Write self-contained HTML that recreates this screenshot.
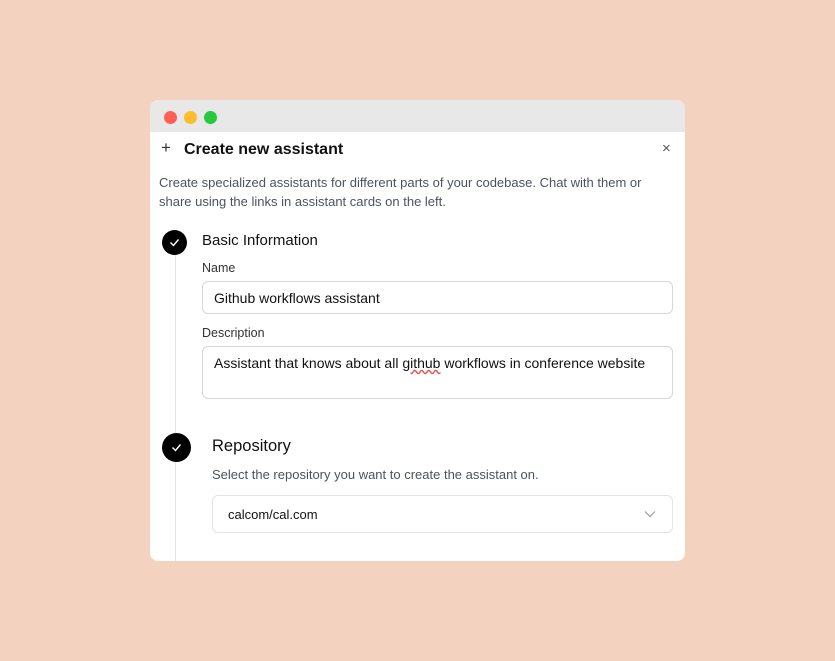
<!DOCTYPE html>
<html><head><style>
*{box-sizing:border-box;margin:0;padding:0}
body{width:835px;height:661px;background:#f3d2bf;font-family:"Liberation Sans",sans-serif;position:relative;overflow:hidden}
.win{position:absolute;left:150px;top:100px;width:535px;height:461px;background:#fff;border-radius:8px;overflow:hidden}
.bar{height:32px;background:#e8e8e8;position:relative}
.dot{position:absolute;top:11px;width:13px;height:13px;border-radius:50%}
.a{position:absolute;white-space:nowrap}
.inp{position:absolute;border:1px solid #d4d6dc;border-radius:6px;font-size:14px;color:#111}
.chk{position:absolute;border-radius:50%;background:#000}
</style></head><body>
<div class="win">
<div class="bar">
<div class="dot" style="left:14px;background:#fe5f57"></div>
<div class="dot" style="left:34px;background:#febc2e"></div>
<div class="dot" style="left:54px;background:#28c840"></div>
</div>
<div class="a" style="left:11px;top:38px;font-size:17px;color:#333">+</div>
<div class="a" style="left:34px;top:41px;font-size:16px;font-weight:bold;color:#111">Create new assistant</div>
<div class="a" style="left:512px;top:40px;font-size:15px;color:#555">×</div>
<div class="a" style="left:9px;top:73px;font-size:13px;line-height:19px;color:#4b5260">Create specialized assistants for different parts of your codebase. Chat with them or<br>share using the links in assistant cards on the left.</div>
<div style="position:absolute;left:25px;top:150px;width:1px;height:311px;background:#e2e2e2"></div>
<div class="chk" style="left:12px;top:130px;width:25px;height:25px"><svg width="25" height="25"><path d="M8.5 12.5l3 3 5-6" stroke="#fff" stroke-width="1.4" fill="none"/></svg></div>
<div class="a" style="left:52px;top:132px;font-size:15px;color:#111">Basic Information</div>
<div class="a" style="left:52px;top:161px;font-size:12.5px;color:#333">Name</div>
<div class="inp" style="left:52px;top:181px;width:471px;height:33px;padding:8px 11px">Github workflows assistant</div>
<div class="a" style="left:52px;top:226px;font-size:12.5px;color:#333">Description</div>
<div class="inp" style="left:52px;top:246px;width:471px;height:53px;padding:8px 11px">Assistant that knows about all <span style="text-decoration:underline wavy #e05050">github</span> workflows in conference website</div>
<div class="chk" style="left:12px;top:333px;width:29px;height:29px"><svg width="29" height="29"><path d="M10.5 14.5l3 3 5-6" stroke="#fff" stroke-width="1.4" fill="none"/></svg></div>
<div class="a" style="left:62px;top:337px;font-size:16.5px;color:#111">Repository</div>
<div class="a" style="left:62px;top:367px;font-size:13px;color:#4b5260">Select the repository you want to create the assistant on.</div>
<div class="inp" style="left:62px;top:395px;width:461px;height:38px;padding:11px 15px;border-color:#e2e4e8;font-size:13px">calcom/cal.com
<svg style="position:absolute;right:16px;top:14px" width="12" height="8"><path d="M1 1.5l5 5 5-5" stroke="#999" stroke-width="1.2" fill="none"/></svg></div>
</div>
</body></html>
